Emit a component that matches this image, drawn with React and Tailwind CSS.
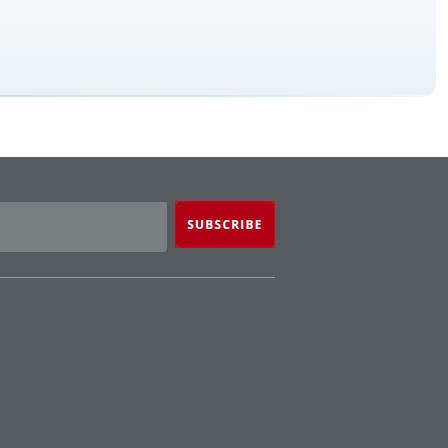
export default function App() {
  return (
    <div className="w-[448px] h-[448px] flex flex-col bg-white overflow-hidden" style={{ fontFamily: '"Open Sans", "Liberation Sans", sans-serif' }}>
      <div className="h-[157px] shrink-0 bg-white">
        <div className="w-[436px] h-[97px] rounded-br-[14px] overflow-hidden flex flex-col">
          <div className="flex-1 bg-gradient-to-b from-[#f5f8fa] to-[#ebf0f4]" />
          <div className="h-[2px] bg-gradient-to-r from-[#cfe2ea] via-[#d9e7ee] to-[#f3f7f9]" />
        </div>
      </div>
      <div className="flex-1 bg-[#555b5e] pt-[44px]">
        <div className="flex items-start gap-[8px]">
          <div className="w-[167px] h-[50px] bg-[#797e81] rounded-r-[3px] mt-px" />
          <div className="border border-[#e0000f] p-0">
            <button className="w-[98px] h-[45px] bg-[#b10016] rounded-[4px] text-white text-[12px] font-bold tracking-[1.2px] flex items-center justify-center">
              SUBSCRIBE
            </button>
          </div>
        </div>
        <div className="w-[275px] h-px bg-[#979b9d] mt-[25px]" />
      </div>
    </div>
  );
}
